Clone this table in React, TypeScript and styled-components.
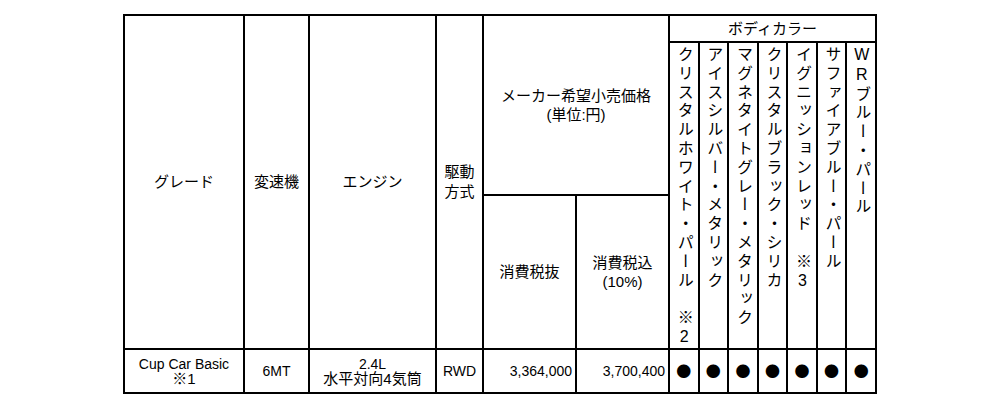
import styled, { createGlobalStyle } from "styled-components";

const GlobalStyle = createGlobalStyle`
  html, body {
    margin: 0;
    padding: 0;
    background: #fff;
  }
  body {
    font-family: "Liberation Sans", "Noto Sans CJK JP", sans-serif;
    color: #000;
  }
`;

const colors = [
  "クリスタルホワイト・パール　※2",
  "アイスシルバー・メタリック",
  "マグネタイトグレー・メタリック",
  "クリスタルブラック・シリカ",
  "イグニッションレッド　※3",
  "サファイアブルー・パール",
  "WRブルー・パール",
];

const colWidths = [120, 65, 127, 47, 93, 93, 29.57, 29.57, 29.57, 29.57, 29.57, 29.57, 29.58];

const Page = styled.div`
  padding-top: 14px;
`;

const Table = styled.table`
  width: 752px;
  margin: 0 auto;
  border-collapse: collapse;
  table-layout: fixed;
  font-size: 15px;
`;

const Row = styled.tr<{ h: number }>`
  height: ${({ h }) => h}px;
`;

const Th = styled.th<{ lh?: number }>`
  border: 2px solid #000;
  padding: 0 2px;
  font-weight: normal;
  text-align: center;
  vertical-align: middle;
  line-height: ${({ lh }) => lh ?? 20}px;
`;

const ColorTh = styled.th`
  border: 2px solid #000;
  padding: 3px 0 0;
  font-weight: normal;
  vertical-align: top;
`;

const VerticalLabel = styled.div`
  writing-mode: vertical-rl;
  text-orientation: upright;
  font-size: 16px;
  letter-spacing: 2.8px;
  line-height: 20px;
  margin: 0 auto;
  text-align: left;
`;

const Td = styled.td<{ align?: "left" | "center" | "right" }>`
  border: 2px solid #000;
  padding: 0 3px;
  text-align: ${({ align }) => align ?? "center"};
  vertical-align: middle;
  line-height: 15px;
`;

const Line = styled.div`
  height: 15px;
  line-height: 15px;
  white-space: nowrap;
`;

const Latin = styled.span`
  font-size: 14px;
`;

const Dot = styled.span`
  font-family: "Noto Sans CJK JP", sans-serif;
  font-size: 15px;
  line-height: 15px;
`;

export default function App() {
  return (
    <>
      <GlobalStyle />
      <Page>
        <Table>
          <colgroup>
            {colWidths.map((w, i) => (
              <col key={i} style={{ width: w }} />
            ))}
          </colgroup>
          <thead>
            <Row h={27}>
              <Th rowSpan={3}>グレード</Th>
              <Th rowSpan={3}>変速機</Th>
              <Th rowSpan={3}>エンジン</Th>
              <Th rowSpan={3}>
                駆動
                <br />
                方式
              </Th>
              <Th colSpan={2} rowSpan={2} lh={19}>
                メーカー希望小売価格
                <br />
                (単位:円)
              </Th>
              <Th colSpan={7} lh={18}>
                ボディカラー
              </Th>
            </Row>
            <Row h={150}>
              {colors.map((c) => (
                <ColorTh key={c} rowSpan={2}>
                  <VerticalLabel>{c}</VerticalLabel>
                </ColorTh>
              ))}
            </Row>
            <Row h={151}>
              <Th>消費税抜</Th>
              <Th lh={19}>
                消費税込
                <br />
                (10%)
              </Th>
            </Row>
          </thead>
          <tbody>
            <Row h={44}>
              <Td>
                <Line>
                  <Latin>Cup Car Basic</Latin>
                </Line>
                <Line>※1</Line>
              </Td>
              <Td>
                <Latin>6MT</Latin>
              </Td>
              <Td>
                <Line>
                  <Latin>2.4L</Latin>
                </Line>
                <Line>水平対向4気筒</Line>
              </Td>
              <Td>
                <Latin>RWD</Latin>
              </Td>
              <Td align="right">
                <Latin>3,364,000</Latin>
              </Td>
              <Td align="right">
                <Latin>3,700,400</Latin>
              </Td>
              {colors.map((c) => (
                <Td key={c}>
                  <Dot>●</Dot>
                </Td>
              ))}
            </Row>
          </tbody>
        </Table>
      </Page>
    </>
  );
}
